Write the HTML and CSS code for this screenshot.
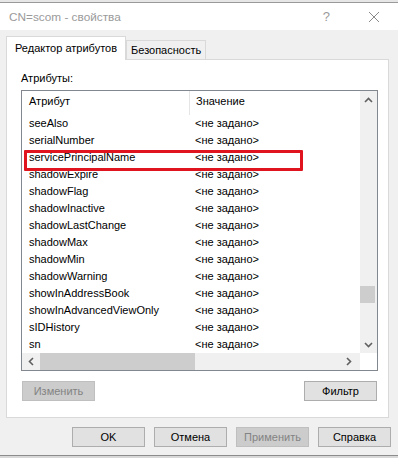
FILE: index.html
```html
<!DOCTYPE html>
<html lang="ru">
<head>
    <meta charset="UTF-8">
    <title>CN=scom - свойства</title>
    <link rel="stylesheet" href="styles.css">
</head>
<body>
    <div class="backdrop"></div>
    <div class="window">
        <div class="titlebar">
            <span class="title">CN=scom - свойства</span>
            <span class="help">?</span>
            <svg class="close" width="12" height="12" viewBox="0 0 12 12">
                <path d="M1 1 L11 11 M11 1 L1 11" stroke="#8a8a8a" stroke-width="1" fill="none"/>
            </svg>
        </div>

        <div class="client">
            <div class="tabs">
                <div class="tab active">Редактор атрибутов</div>
                <div class="tab">Безопасность</div>
            </div>

            <div class="panel">
                <div class="label">Атрибуты:</div>

                <div class="list">
                    <div class="list-body">
                        <div class="rows">
                            <div class="head">
                                <span class="c1">Атрибут</span>
                                <span class="c2">Значение</span>
                            </div>
                            <div class="row"><span class="c1">seeAlso</span><span class="c2">&lt;не задано&gt;</span></div>
                            <div class="row"><span class="c1">serialNumber</span><span class="c2">&lt;не задано&gt;</span></div>
                            <div class="row"><span class="c1">servicePrincipalName</span><span class="c2">&lt;не задано&gt;</span></div>
                            <div class="row"><span class="c1">shadowExpire</span><span class="c2">&lt;не задано&gt;</span></div>
                            <div class="row"><span class="c1">shadowFlag</span><span class="c2">&lt;не задано&gt;</span></div>
                            <div class="row"><span class="c1">shadowInactive</span><span class="c2">&lt;не задано&gt;</span></div>
                            <div class="row"><span class="c1">shadowLastChange</span><span class="c2">&lt;не задано&gt;</span></div>
                            <div class="row"><span class="c1">shadowMax</span><span class="c2">&lt;не задано&gt;</span></div>
                            <div class="row"><span class="c1">shadowMin</span><span class="c2">&lt;не задано&gt;</span></div>
                            <div class="row"><span class="c1">shadowWarning</span><span class="c2">&lt;не задано&gt;</span></div>
                            <div class="row"><span class="c1">showInAddressBook</span><span class="c2">&lt;не задано&gt;</span></div>
                            <div class="row"><span class="c1">showInAdvancedViewOnly</span><span class="c2">&lt;не задано&gt;</span></div>
                            <div class="row"><span class="c1">sIDHistory</span><span class="c2">&lt;не задано&gt;</span></div>
                            <div class="row"><span class="c1">sn</span><span class="c2">&lt;не задано&gt;</span></div>
                        </div>
                        <div class="vscroll">
                            <svg width="9" height="6" viewBox="0 0 9 6"><path d="M1 5 L4.5 1.5 L8 5" stroke="#606060" stroke-width="1.6" fill="none"/></svg>
                            <div class="vtrack"><div class="vthumb"></div></div>
                            <svg width="9" height="6" viewBox="0 0 9 6"><path d="M1 1 L4.5 4.5 L8 1" stroke="#606060" stroke-width="1.6" fill="none"/></svg>
                        </div>
                    </div>
                    <div class="hscroll-row">
                        <div class="hscroll">
                            <svg width="6" height="9" viewBox="0 0 6 9"><path d="M5 1 L1.5 4.5 L5 8" stroke="#606060" stroke-width="1.6" fill="none"/></svg>
                            <div class="htrack"><div class="hthumb"></div></div>
                            <svg width="6" height="9" viewBox="0 0 6 9"><path d="M1 1 L4.5 4.5 L1 8" stroke="#606060" stroke-width="1.6" fill="none"/></svg>
                        </div>
                        <div class="corner"></div>
                    </div>
                    <div class="highlight"></div>
                </div>

                <div class="panel-buttons">
                    <button class="btn disabled">Изменить</button>
                    <button class="btn">Фильтр</button>
                </div>
            </div>

            <div class="dialog-buttons">
                <button class="btn">OK</button>
                <button class="btn">Отмена</button>
                <button class="btn disabled">Применить</button>
                <button class="btn">Справка</button>
            </div>
        </div>
    </div>
    <div class="under"></div>
</body>
</html>
```

FILE: styles.css
```css
body {
    margin: 0;
    padding: 0;
    width: 398px;
    height: 458px;
    overflow: hidden;
    background: #f0f0f0;
    font-family: "Liberation Sans", Arial, sans-serif;
    font-size: 11px;
    color: #000;
}

.backdrop {
    height: 2px;
    background: #e6e6e6;
    border-bottom: 1px solid #9a9a9a;
}

.window {
    height: 452px;
    border-bottom: 1px solid #8c8c8c;
    background: #f0f0f0;
}

/* title bar */
.titlebar {
    height: 27px;
    background: #ffffff;
    display: flex;
    align-items: center;
    padding-left: 9px;
}

.title {
    font-size: 11.8px;
    color: #9a9a9a;
    flex: 1;
}

.help {
    font-size: 13px;
    color: #9a9a9a;
    margin-right: 38px;
}

.close {
    margin-right: 18px;
}

/* client area */
.client {
    padding: 7px 9px 0 6px;
}

.tabs {
    display: flex;
    align-items: flex-end;
    height: 22px;
    position: relative;
    z-index: 1;
}

.tab {
    height: 18px;
    line-height: 18px;
    padding: 0 4px 0 4px;
    border: 1px solid #d9d9d9;
    border-bottom: none;
    background: #f0f0f0;
}

.tab.active {
    line-height: 23px;
    padding: 0 8px 0 8px;
    background: #ffffff;
    margin-bottom: -1px;
    height: 23px;
}

.panel {
    background: #ffffff;
    border: 1px solid #d9d9d9;
    height: 357px;
    padding: 0 10px 0 14px;
}

.label {
    height: 30px;
    line-height: 36px;
}

/* list view */
.list {
    position: relative;
    border: 1px solid #828790;
    height: 279px;
    display: flex;
    flex-direction: column;
}

.list-body {
    display: flex;
    height: 262px;
}

.rows {
    flex: 1;
    overflow: hidden;
}

.head {
    display: flex;
    height: 24px;
    line-height: 21px;
}

.head .c1 {
    border-right: 1px solid #e5e5e5;
}

.row {
    display: flex;
    height: 17px;
    line-height: 17px;
}

.c1 {
    width: 160px;
    padding-left: 7px;
    flex: none;
    white-space: nowrap;
}

.c2 {
    padding-left: 6px;
    white-space: nowrap;
}

.vscroll {
    width: 17px;
    background: #f0f0f0;
    display: flex;
    flex-direction: column;
    align-items: center;
    padding: 6px 0 5px;
    gap: 4px;
    box-sizing: border-box;
}

.vtrack {
    flex: 1;
    width: 100%;
    position: relative;
}

.vthumb {
    position: absolute;
    left: 0;
    right: 2px;
    top: 179px;
    height: 17px;
    background: #cdcdcd;
}

.hscroll-row {
    display: flex;
    height: 17px;
}

.hscroll {
    flex: 1;
    background: #f0f0f0;
    display: flex;
    align-items: center;
    padding: 0 8px 0 6px;
    gap: 6px;
}

.htrack {
    flex: 1;
    height: 100%;
    position: relative;
}

.hthumb {
    position: absolute;
    left: 0;
    top: 0;
    bottom: 0;
    width: 155px;
    background: #cdcdcd;
}

.corner {
    width: 17px;
    background: #ffffff;
}

.highlight {
    position: absolute;
    left: 2px;
    top: 59px;
    width: 273px;
    height: 15px;
    border: 3px solid #e0141e;
    border-radius: 1px;
}

/* buttons */
.btn {
    font-family: "Liberation Sans", Arial, sans-serif;
    font-size: 11px;
    font-weight: normal;
    width: 73px;
    height: 20px;
    padding: 0;
    border: 1px solid #adadad;
    border-radius: 0;
    background: #e1e1e1;
    color: #000;
}

.btn.disabled {
    background: #cccccc;
    border-color: #bfbfbf;
    color: #838383;
}

.panel-buttons {
    display: flex;
    justify-content: space-between;
    padding: 10px 1px 0 1px;
}

.dialog-buttons {
    display: flex;
    justify-content: flex-end;
    gap: 9px;
    padding-top: 9px;
    margin-right: -2px;
}

.under {
    height: 2px;
    background: #d8d8d8;
}
```
